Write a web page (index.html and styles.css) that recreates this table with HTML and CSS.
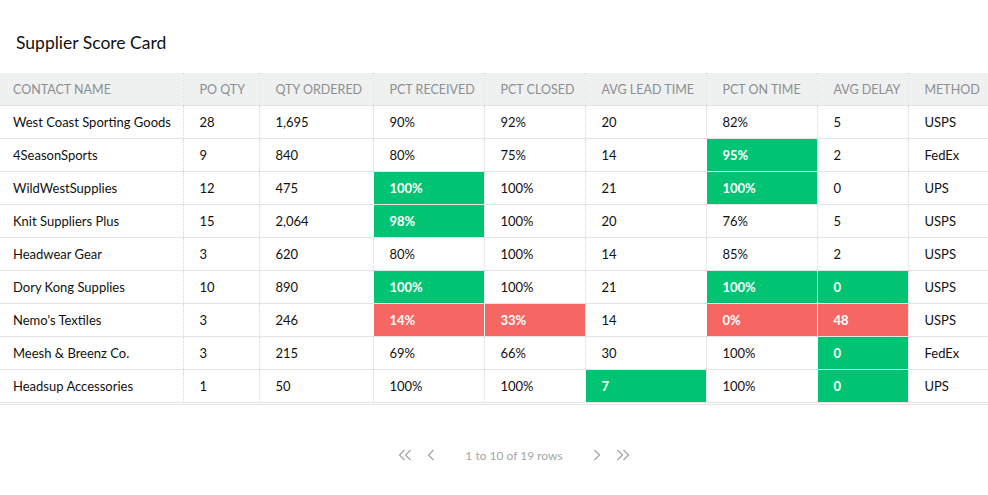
FILE: index.html
```html
<!DOCTYPE html>
<html>
<head>
<meta charset="utf-8">
<link rel="stylesheet" href="styles.css">
</head>
<body>
<div class="card">
  <h1 class="title">Supplier Score Card</h1>
  <div class="grid-wrap">
    <table class="grid">
      <colgroup>
        <col class="c1"><col class="c2"><col class="c3"><col class="c4"><col class="c5"><col class="c6"><col class="c7"><col class="c8"><col class="c9">
      </colgroup>
      <thead>
        <tr>
          <th>CONTACT NAME</th><th>PO QTY</th><th>QTY ORDERED</th><th>PCT RECEIVED</th><th>PCT CLOSED</th><th>AVG LEAD TIME</th><th>PCT ON TIME</th><th>AVG DELAY</th><th>METHOD</th>
        </tr>
      </thead>
      <tbody>
        <tr><td>West Coast Sporting Goods</td><td>28</td><td>1,695</td><td>90%</td><td>92%</td><td>20</td><td>82%</td><td>5</td><td>USPS</td></tr>
        <tr><td>4SeasonSports</td><td>9</td><td>840</td><td>80%</td><td>75%</td><td>14</td><td class="good">95%</td><td>2</td><td>FedEx</td></tr>
        <tr><td>WildWestSupplies</td><td>12</td><td>475</td><td class="good">100%</td><td>100%</td><td>21</td><td class="good">100%</td><td>0</td><td>UPS</td></tr>
        <tr><td>Knit Suppliers Plus</td><td>15</td><td>2,064</td><td class="good">98%</td><td>100%</td><td>20</td><td>76%</td><td>5</td><td>USPS</td></tr>
        <tr><td>Headwear Gear</td><td>3</td><td>620</td><td>80%</td><td>100%</td><td>14</td><td>85%</td><td>2</td><td>USPS</td></tr>
        <tr><td>Dory Kong Supplies</td><td>10</td><td>890</td><td class="good">100%</td><td>100%</td><td>21</td><td class="good">100%</td><td class="good">0</td><td>USPS</td></tr>
        <tr><td>Nemo's Textiles</td><td>3</td><td>246</td><td class="bad">14%</td><td class="bad">33%</td><td>14</td><td class="bad">0%</td><td class="bad">48</td><td>USPS</td></tr>
        <tr><td>Meesh &amp; Breenz Co.</td><td>3</td><td>215</td><td>69%</td><td>66%</td><td>30</td><td>100%</td><td class="good">0</td><td>FedEx</td></tr>
        <tr><td>Headsup Accessories</td><td>1</td><td>50</td><td>100%</td><td>100%</td><td class="good">7</td><td>100%</td><td class="good">0</td><td>UPS</td></tr>
      </tbody>
    </table>
  </div>
  <div class="pager">
    <span class="pg-btn">
      <svg width="14" height="12" viewBox="0 0 14 12"><path d="M6.5 1 L1.5 6 L6.5 11 M12.5 1 L7.5 6 L12.5 11" fill="none" stroke="#a3a6a9" stroke-width="1.3"/></svg>
    </span>
    <span class="pg-btn">
      <svg width="8" height="12" viewBox="0 0 8 12"><path d="M6.5 1 L1.5 6 L6.5 11" fill="none" stroke="#a3a6a9" stroke-width="1.3"/></svg>
    </span>
    <span class="pg-text">1 to 10 of 19 rows</span>
    <span class="pg-btn">
      <svg width="8" height="12" viewBox="0 0 8 12"><path d="M1.5 1 L6.5 6 L1.5 11" fill="none" stroke="#a3a6a9" stroke-width="1.3"/></svg>
    </span>
    <span class="pg-btn">
      <svg width="14" height="12" viewBox="0 0 14 12"><path d="M1.5 1 L6.5 6 L1.5 11 M7.5 1 L12.5 6 L7.5 11" fill="none" stroke="#a3a6a9" stroke-width="1.3"/></svg>
    </span>
  </div>
</div>
</body>
</html>
```
FILE: styles.css
```css
html, body {
  margin: 0;
  padding: 0;
  background: #ffffff;
}
body {
  font-family: Lato, "Open Sans", Arial, sans-serif;
  color: #111;
  width: 988px;
  overflow: hidden;
}
.card {
  display: flex;
  flex-direction: column;
}
.title {
  margin: 0;
  padding: 33px 0 0 16px;
  height: 40px;
  box-sizing: content-box;
  font-size: 17.5px;
  font-weight: 400;
  line-height: 20px;
  color: #111;
}
.grid-wrap {
  overflow: hidden;
  width: 988px;
  border-bottom: 1px solid #e3e3e3;
  padding-bottom: 1px;
}
.grid {
  table-layout: fixed;
  border-collapse: collapse;
  width: 1000px;
  font-size: 13px;
}
.c1 { width: 183px; }
.c2 { width: 76px; }
.c3 { width: 114px; }
.c4 { width: 111px; }
.c5 { width: 101px; }
.c6 { width: 121px; }
.c7 { width: 111px; }
.c8 { width: 91px; }
.c9 { width: 92px; }
.grid th, .grid td {
  text-align: left;
  padding: 0 0 0 16px;
  height: 32px;
  white-space: nowrap;
  overflow: hidden;
  border-left: 1px dotted #d6d6d6;
  border-bottom: 1px solid #e4e4e4;
}
.grid th:first-child, .grid td:first-child {
  border-left: none;
  padding-left: 13px;
}
.grid th {
  background: #eff0f0;
  color: #8b8f93;
  font-weight: 400;
  font-size: 12.5px;
  border-bottom: 1px solid #e4e4e4;
}
.grid td.good {
  background: #00c473;
  color: #fff;
  font-weight: 700;
  border-left: 1px solid #ffffff;
}
.grid td.bad {
  background: #f66763;
  color: #fff;
  font-weight: 700;
  border-left: 1px solid #ffffff;
}
.pager {
  display: flex;
  align-items: center;
  justify-content: center;
  margin-top: 42px;
  padding-left: 40px;
  height: 16px;
  color: #a3a6a9;
  font-size: 12px;
}
.pg-btn {
  display: flex;
  align-items: center;
  justify-content: center;
  width: 26px;
}
.pg-text {
  padding: 0 21px;
}
```
